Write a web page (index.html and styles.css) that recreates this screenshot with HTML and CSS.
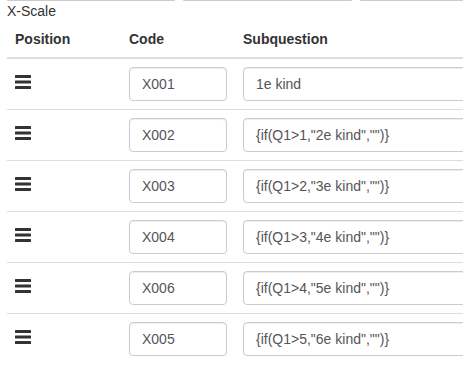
FILE: index.html
```html
<!DOCTYPE html>
<html lang="en">
<head>
  <meta charset="UTF-8">
  <title>X-Scale subquestions</title>
  <link rel="stylesheet" href="styles.css">
</head>
<body>
  <div class="tabs">
    <div class="tab tab-1"></div>
    <div class="tab tab-2"></div>
    <div class="tab tab-3"></div>
  </div>

  <div class="scale-label">X-Scale</div>

  <table class="table">
    <thead>
      <tr>
        <th class="col-position">Position</th>
        <th class="col-code">Code</th>
        <th class="col-sub">Subquestion</th>
      </tr>
    </thead>
    <tbody>
      <tr>
        <td><span class="handle"><svg width="16" height="14" viewBox="0 0 16 14"><rect y="0" width="16" height="3" rx="0.5"/><rect y="5.5" width="16" height="3" rx="0.5"/><rect y="11" width="16" height="3" rx="0.5"/></svg></span></td>
        <td><input class="form-control code" type="text" value="X001"></td>
        <td><input class="form-control sub" type="text" value="1e kind"></td>
      </tr>
      <tr>
        <td><span class="handle"><svg width="16" height="14" viewBox="0 0 16 14"><rect y="0" width="16" height="3" rx="0.5"/><rect y="5.5" width="16" height="3" rx="0.5"/><rect y="11" width="16" height="3" rx="0.5"/></svg></span></td>
        <td><input class="form-control code" type="text" value="X002"></td>
        <td><input class="form-control sub" type="text" value='{if(Q1>1,"2e kind","")}'></td>
      </tr>
      <tr>
        <td><span class="handle"><svg width="16" height="14" viewBox="0 0 16 14"><rect y="0" width="16" height="3" rx="0.5"/><rect y="5.5" width="16" height="3" rx="0.5"/><rect y="11" width="16" height="3" rx="0.5"/></svg></span></td>
        <td><input class="form-control code" type="text" value="X003"></td>
        <td><input class="form-control sub" type="text" value='{if(Q1>2,"3e kind","")}'></td>
      </tr>
      <tr>
        <td><span class="handle"><svg width="16" height="14" viewBox="0 0 16 14"><rect y="0" width="16" height="3" rx="0.5"/><rect y="5.5" width="16" height="3" rx="0.5"/><rect y="11" width="16" height="3" rx="0.5"/></svg></span></td>
        <td><input class="form-control code" type="text" value="X004"></td>
        <td><input class="form-control sub" type="text" value='{if(Q1>3,"4e kind","")}'></td>
      </tr>
      <tr>
        <td><span class="handle"><svg width="16" height="14" viewBox="0 0 16 14"><rect y="0" width="16" height="3" rx="0.5"/><rect y="5.5" width="16" height="3" rx="0.5"/><rect y="11" width="16" height="3" rx="0.5"/></svg></span></td>
        <td><input class="form-control code" type="text" value="X006"></td>
        <td><input class="form-control sub" type="text" value='{if(Q1>4,"5e kind","")}'></td>
      </tr>
      <tr>
        <td><span class="handle"><svg width="16" height="14" viewBox="0 0 16 14"><rect y="0" width="16" height="3" rx="0.5"/><rect y="5.5" width="16" height="3" rx="0.5"/><rect y="11" width="16" height="3" rx="0.5"/></svg></span></td>
        <td><input class="form-control code" type="text" value="X005"></td>
        <td><input class="form-control sub" type="text" value='{if(Q1>5,"6e kind","")}'></td>
      </tr>
    </tbody>
  </table>
</body>
</html>
```

FILE: styles.css
```css
html, body { margin: 0; padding: 0; background: #fff; overflow: hidden; }
body { font-family: "Liberation Sans", Arial, sans-serif; font-size: 14px; line-height: 20px; color: #333; padding-left: 7px; width: 700px; }

.tabs { display: flex; gap: 8px; height: 1px; }
.tab { height: 0; border-bottom: 1px solid #ccc; border-radius: 0 0 3px 3px; }
.tab-1 { width: 168px; }
.tab-2 { width: 169px; }
.tab-3 { width: 200px; }

.scale-label { height: 20px; }

.table { border-collapse: collapse; border-spacing: 0; width: 600px; }
.table th, .table td { padding: 8px; text-align: left; vertical-align: top; line-height: 20px; }
.table th { font-weight: bold; border-bottom: 2px solid #ddd; }
.table td { border-top: 1px solid #ddd; }
.col-position { width: 98px; }
.col-code { width: 98px; }

.handle { display: block; margin-top: 8px; height: 14px; }
.handle svg { display: block; fill: #333; }

.form-control { display: block; box-sizing: border-box; height: 34px; padding: 6px 12px; font-family: inherit; font-size: 14px; line-height: 20px; color: #555; background: #fff; border: 1px solid #ccc; border-radius: 4px; box-shadow: inset 0 1px 1px rgba(0,0,0,0.075); margin: 0; }
.form-control.code { width: 98px; }
.form-control.sub { width: 300px; }
```
